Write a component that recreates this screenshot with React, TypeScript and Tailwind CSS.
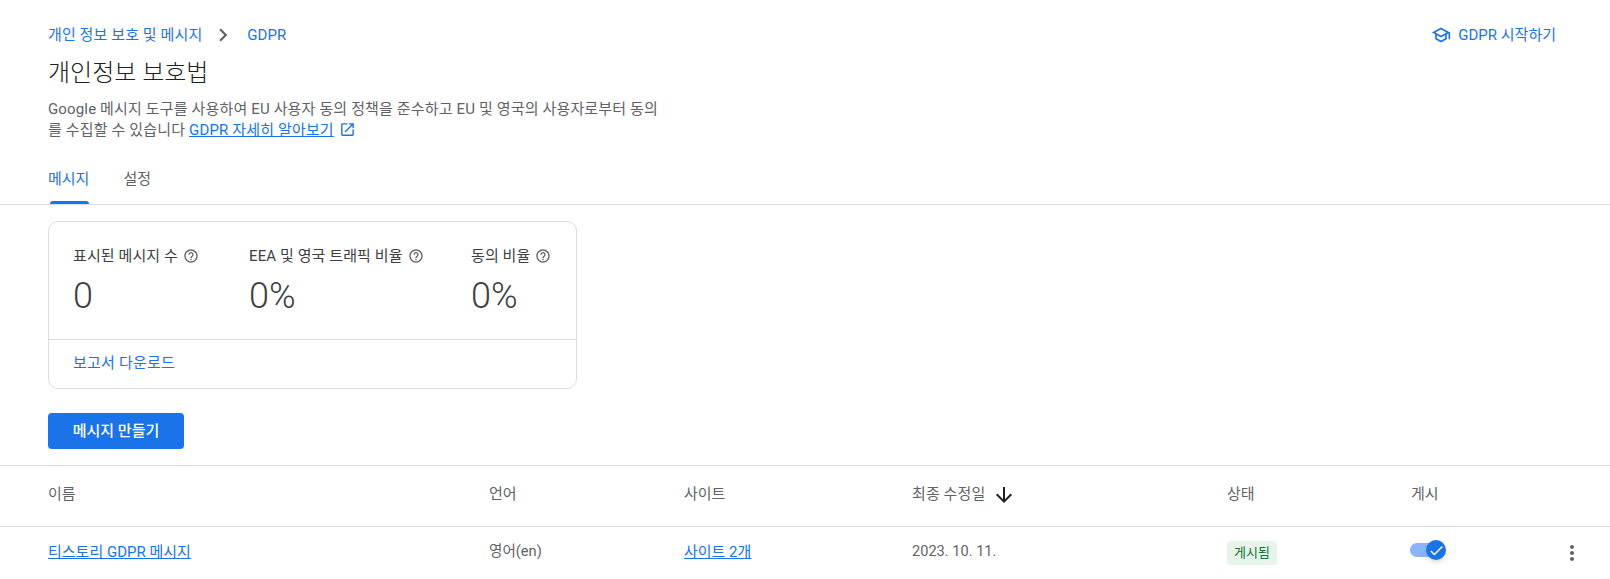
const HELP_PATH =
  'M11 18h2v-2h-2v2zm1-16C6.48 2 2 6.48 2 12s4.48 10 10 10 10-4.48 10-10S17.52 2 12 2zm0 18c-4.41 0-8-3.59-8-8s3.59-8 8-8 8 3.59 8 8-3.59 8-8 8zm0-14c-2.21 0-4 1.79-4 4h2c0-1.1.9-2 2-2s2 .9 2 2c0 2-3 1.75-3 5h2c0-2.25 3-2.5 3-5 0-2.21-1.79-4-4-4z'

function Icon({ d, className }: { d: string; className: string }) {
  return (
    <svg viewBox="0 0 24 24" fill="currentColor" className={className}>
      <path d={d} />
    </svg>
  )
}

function Stat({ label, value, className }: { label: string; value: string; className: string }) {
  return (
    <div className={className}>
      <div className="flex items-center gap-[5px] h-5 text-[15px] tracking-[0.1px] text-[#3c4043]">
        <span>{label}</span>
        <Icon d={HELP_PATH} className="w-4 h-4 text-[#5f6368]" />
      </div>
      <div className="mt-2 text-[36px] leading-[44px] text-[#3c4043] font-light">{value}</div>
    </div>
  )
}

const gridCols = 'grid grid-cols-[441px_195px_228px_315px_184px_1fr] pl-[48px] items-center'

export default function App() {
  return (
    <div className="w-[1610px] h-[579px] overflow-hidden bg-white font-['Roboto','Noto_Sans_CJK_KR',sans-serif]">
      <div className="pl-[48px] pr-[54px] pt-[25px]">
        <div className="flex items-center justify-between h-5">
          <div className="flex items-center text-[15px] tracking-[0.1px] text-[#1a73e8]">
            <span>개인 정보 보호 및 메시지</span>
            <Icon
              d="M10 6 8.59 7.41 13.17 12l-4.58 4.59L10 18l6-6z"
              className="w-[26px] h-[26px] text-[#5f6368] ml-2 mr-[11px]"
            />
            <span>GDPR</span>
          </div>
          <div className="flex items-center gap-[7px] text-[15px] text-[#1a73e8]">
            <Icon
              d="M12 3 1 9l4 2.18v6L12 21l7-3.82v-6l2-1.09V17h2V9L12 3zm6.82 6L12 12.72 5.18 9 12 5.28 18.82 9zM17 15.99l-5 2.73-5-2.73v-3.72L12 15l5-2.73v3.72z"
              className="w-5 h-5"
            />
            <span>GDPR 시작하기</span>
          </div>
        </div>
        <h1 className="mt-3 text-2xl leading-8 font-light text-[#202124]">개인정보 보호법</h1>
        <p className="mt-[10px] w-[620px] text-[15px] tracking-[0.15px] leading-[21px] text-[#5f6368] break-all">
          Google 메시지 도구를 사용하여 EU 사용자 동의 정책을 준수하고 EU 및 영국의 사용자로부터 동의를 수집할 수 있습니다{' '}
          <a className="text-[#1a73e8] underline">GDPR 자세히 알아보기</a>
          <Icon
            d="M19 19H5V5h7V3H5a2 2 0 0 0-2 2v14a2 2 0 0 0 2 2h14c1.1 0 2-.9 2-2v-7h-2v7zM14 3v2h3.59l-9.83 9.83 1.41 1.41L19 6.41V10h2V3h-7z"
            className="inline w-[17px] h-[17px] ml-[5px] text-[#1a73e8] align-[-3px]"
          />
        </p>
      </div>

      <div className="pl-[48px] flex gap-[34px] h-[64px] pt-[28px] border-b border-[#dadce0] text-[15px] leading-5">
        <div className="relative text-[#1a73e8]">
          메시지
          <div className="absolute top-[32px] left-[2px] right-0 h-[3px] bg-[#1a73e8] rounded-t-sm" />
        </div>
        <div className="text-[#5f6368]">설정</div>
      </div>

      <div className="ml-[48px] mt-4 w-[529px] h-[168px] rounded-[10px] border border-[#dadce0]">
        <div className="flex h-[118px] border-b border-[#dadce0] pl-6 pt-6">
          <Stat label="표시된 메시지 수" value="0" className="w-[176px]" />
          <Stat label="EEA 및 영국 트래픽 비율" value="0%" className="w-[222px]" />
          <Stat label="동의 비율" value="0%" className="" />
        </div>
        <div className="pl-6 pt-[13px] text-[15px] tracking-[0.2px] leading-5 text-[#1a73e8]">보고서 다운로드</div>
      </div>

      <button className="block ml-[48px] mt-6 w-[136px] h-9 rounded-[4px] bg-[#1a73e8] text-white text-[15px] font-medium">
        메시지 만들기
      </button>

      <div className="mt-4 border-t border-[#dadce0]">
        <div className={`${gridCols} h-[61px] pb-[3px] border-b border-[#dadce0] text-[15px] text-[#5f6368]`}>
          <div>이름</div>
          <div>언어</div>
          <div>사이트</div>
          <div className="flex items-center gap-[7px] tracking-[0.1px]">
            최종 수정일
            <Icon
              d="M20 12l-1.41-1.41L13 16.17V4h-2v12.17l-5.58-5.59L4 12l8 8 8-8z"
              className="w-6 h-6 text-[#202124]"
            />
          </div>
          <div>상태</div>
          <div>게시</div>
        </div>
        <div className={`${gridCols} h-[52px] text-[15px] text-[#5f6368]`}>
          <a className="text-[#1a73e8] underline -mt-[2px]">티스토리 GDPR 메시지</a>
          <div className="-mt-[2px] text-[14.6px]">영어(en)</div>
          <a className="text-[#1a73e8] underline -mt-[2px]">사이트 2개</a>
          <div className="-mt-[2px] text-[14.6px]">2023. 10. 11.</div>
          <div>
            <span className="inline-block h-6 leading-6 px-[7px] rounded-[4px] bg-[#e6f4ea] text-[13px] text-[#137333]">
              게시됨
            </span>
          </div>
          <div className="flex items-center justify-between pr-[26px]">
            <div className="relative w-[27px] h-[14px] -ml-[1px] rounded-full bg-[#8ab4f8] -mt-[6px]">
              <div className="absolute -right-[9px] -top-[3px] w-5 h-5 rounded-full bg-[#1a73e8] shadow-md flex items-center justify-center">
                <Icon d="M9 16.17 4.83 12l-1.42 1.41L9 19 21 7l-1.41-1.41z" className="w-[17px] h-[17px] text-white" />
              </div>
            </div>
            <Icon
              d="M12 8c1.1 0 2-.9 2-2s-.9-2-2-2-2 .9-2 2 .9 2 2 2zm0 2c-1.1 0-2 .9-2 2s.9 2 2 2 2-.9 2-2-.9-2-2-2zm0 6c-1.1 0-2 .9-2 2s.9 2 2 2 2-.9 2-2-.9-2-2-2z"
              className="w-6 h-6 text-[#5f6368]"
            />
          </div>
        </div>
      </div>
    </div>
  )
}
